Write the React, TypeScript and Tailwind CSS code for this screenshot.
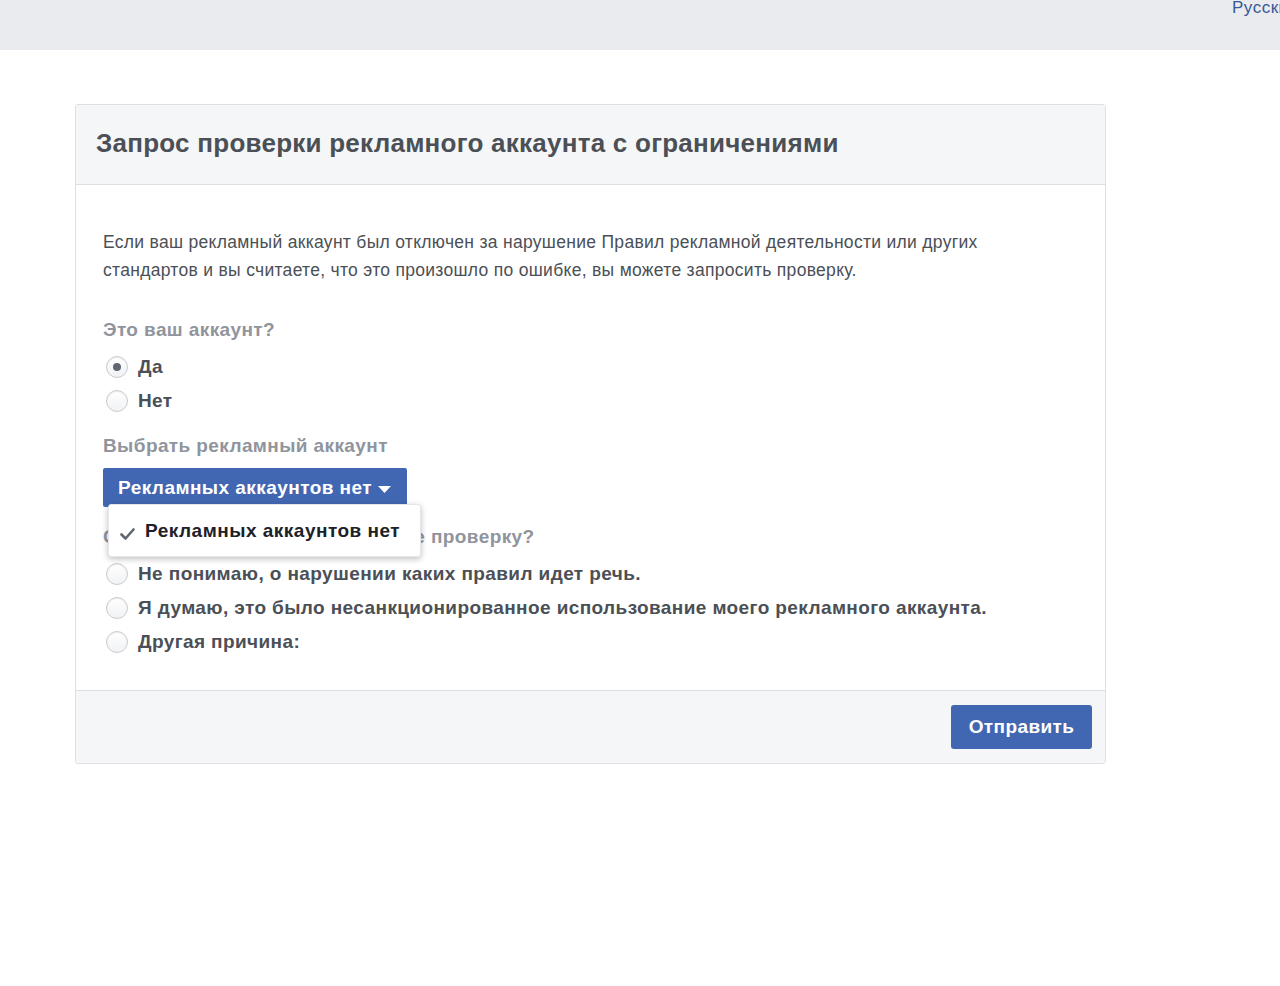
import React from 'react';

const font = { fontFamily: '"Liberation Sans", Arial, Helvetica, sans-serif' };

function Radio({ checked, label }: { checked?: boolean; label: string }) {
  return (
    <label className="flex h-[34px] items-center">
      <span className="ml-[3px] flex h-[22px] w-[22px] items-center justify-center rounded-full border border-[#c9ccd1] bg-gradient-to-b from-white to-[#f1f2f4] shadow-[inset_0_1px_1px_rgba(0,0,0,0.08)]">
        {checked && <span className="h-[8px] w-[8px] rounded-full bg-[#606770]" />}
      </span>
      <span className="ml-[10px] text-[19px] font-bold tracking-[0.4px] text-[#4b4f56]">{label}</span>
    </label>
  );
}

function Caret() {
  return (
    <svg width="13" height="7" viewBox="0 0 13 7" className="ml-[6px] mt-[2px]">
      <path d="M0 0h13L6.5 7z" fill="#fff" />
    </svg>
  );
}

export default function App() {
  return (
    <div className="min-h-screen bg-white" style={font}>
      <div className="flex h-[50px] w-full overflow-hidden bg-[#e9ebee]">
        <div className="flex-1" />
        <div className="w-[48px] shrink-0 whitespace-nowrap text-[17px] leading-4 tracking-[0.5px] text-[#365899]">Русский</div>
      </div>

      <div className="pl-[75px] pt-[54px]">
        <div className="w-[1031px] rounded-[3px] border border-[#dddfe2] bg-white">
          <div className="flex h-[80px] items-center border-b border-[#dddfe2] bg-[#f5f6f7] px-[20px] pb-[2px]">
            <h1 className="text-[26px] font-bold tracking-[0.25px] text-[#4b4f56]">Запрос проверки рекламного аккаунта с ограничениями</h1>
          </div>

          <div className="px-[27px] pb-[31px] pt-[43px]">
            <p className="text-[17.5px] leading-[28px] tracking-[0.3px] text-[#4b4f56]">
              Если ваш рекламный аккаунт был отключен за нарушение Правил рекламной деятельности или других
              <br />
              стандартов и вы считаете, что это произошло по ошибке, вы можете запросить проверку.
            </p>

            <div className="mt-[34px] text-[19px] font-bold leading-[24px] tracking-[0.4px] text-[#90949c]">Это ваш аккаунт?</div>
            <div className="mt-[8px]">
              <Radio checked label="Да" />
              <Radio label="Нет" />
            </div>

            <div className="mt-[16px] text-[19px] font-bold leading-[24px] tracking-[0.4px] text-[#90949c]">Выбрать рекламный аккаунт</div>
            <div className="relative mt-[10px]">
              <button className="flex h-[39px] items-center rounded-[2px] bg-[#4267b2] pl-[15px] pr-[16px] pt-[2px] text-[19px] font-bold tracking-[0.45px] text-white">
                Рекламных аккаунтов нет
                <Caret />
              </button>
              <div className="absolute left-[5px] top-[36px] z-10 flex h-[53px] w-[313px] items-center rounded-[3px] border border-[#e5e6e9] bg-white pt-[2px] shadow-[0_2px_6px_rgba(0,0,0,0.25)]">
                <svg width="15" height="12" viewBox="0 0 15 12" className="ml-[11px] mt-[4px]">
                  <path d="M1.5 6.5l4 4L13.5 1.5" fill="none" stroke="#606770" strokeWidth="2.6" strokeLinecap="round" strokeLinejoin="round" />
                </svg>
                <span className="ml-[10px] text-[19px] font-bold tracking-[0.5px] text-[#1d2129]">Рекламных аккаунтов нет</span>
              </div>
            </div>

            <div className="mt-[18px] text-[19px] font-bold leading-[24px] tracking-[0.4px] text-[#90949c]">С какой целью вы запрашиваете проверку?</div>
            <div className="mt-[8px]">
              <Radio label="Не понимаю, о нарушении каких правил идет речь." />
              <Radio label="Я думаю, это было несанкционированное использование моего рекламного аккаунта." />
              <Radio label="Другая причина:" />
            </div>
          </div>

          <div className="flex h-[73px] items-center justify-end rounded-b-[3px] border-t border-[#dddfe2] bg-[#f5f6f7] pr-[13px]">
            <button className="h-[44px] w-[141px] rounded-[3px] bg-[#4267b2] text-[19px] font-bold tracking-[0.4px] text-white">Отправить</button>
          </div>
        </div>
      </div>
    </div>
  );
}
